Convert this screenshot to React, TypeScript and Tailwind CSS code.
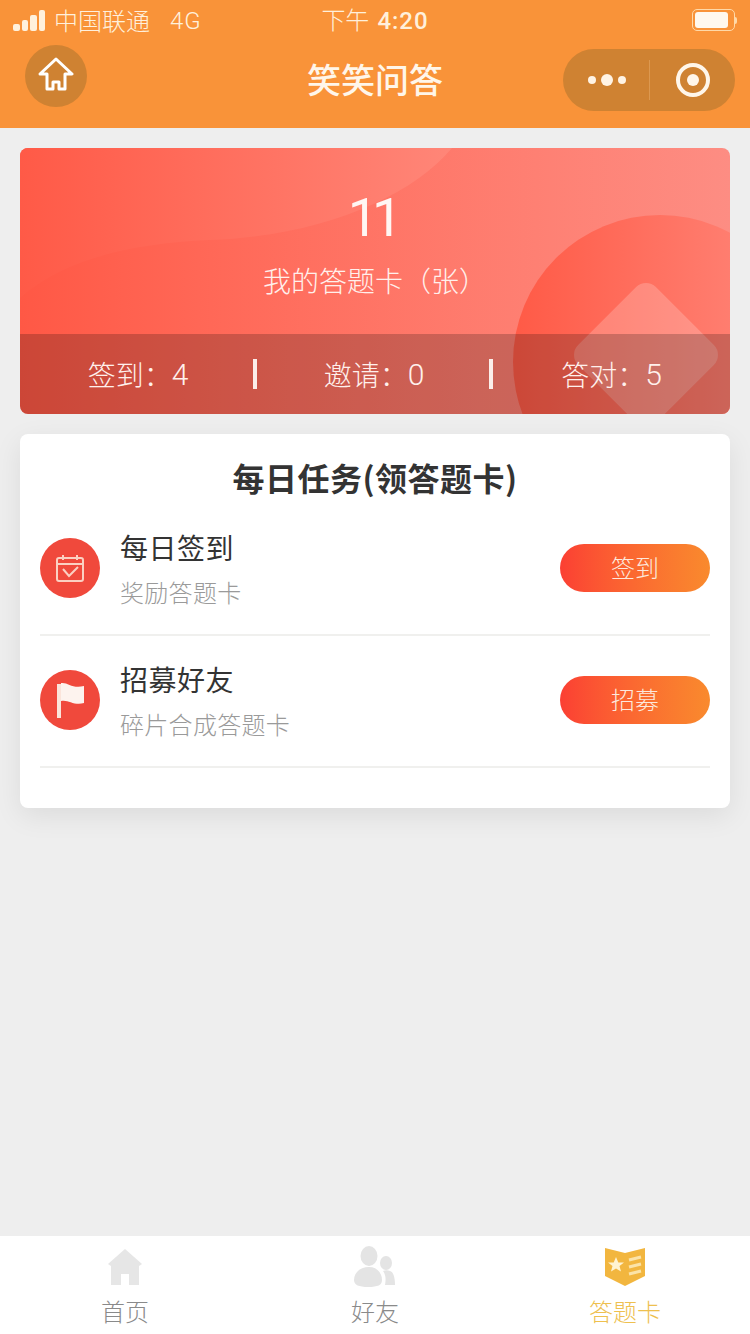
import type { ReactNode } from "react";

const font = { fontFamily: '"Noto Sans CJK SC", "Liberation Sans", sans-serif' };
const digits = { fontFamily: 'Roboto, "Liberation Sans", sans-serif' };

function Signal() {
  return (
    <div className="flex items-end gap-[2px]">
      <span className="h-[7px] w-[6.5px] rounded-[2px] bg-[#fff1dc]" />
      <span className="h-[11px] w-[6.5px] rounded-[2px] bg-[#fff1dc]" />
      <span className="h-[16px] w-[6.5px] rounded-[2px] bg-[#fff1dc]" />
      <span className="h-[21px] w-[6.5px] rounded-[2px] bg-[#fff1dc]" />
    </div>
  );
}

function Battery() {
  return (
    <div className="flex items-center">
      <div className="flex h-[22px] w-[43px] items-center rounded-[5px] border border-[#ffd9a8] p-[2px]">
        <div className="h-full w-[33px] rounded-[3px] bg-[#fff8ee]" />
      </div>
      <div className="h-[7px] w-[2px] rounded-r bg-[#ffd9a8]" />
    </div>
  );
}

function HomeOutline() {
  return (
    <svg viewBox="0 0 36 34" className="mb-[4px] h-[34px] w-[36px]" fill="none" stroke="#fff" strokeWidth="3" strokeLinejoin="round">
      <path d="M18 2 L34 17 H27 V32 H21 V25 H15 V32 H9 V17 H2 Z" />
    </svg>
  );
}

function StatBar() {
  return <span className="h-[30px] w-[4px] shrink-0 bg-[#fbeeea]" />;
}

function Stat({ label, value, className }: { label: string; value: string; className: string }) {
  return (
    <div className={`flex items-center justify-center text-[28px] font-light text-[#fff0ec] ${className}`}>
      <span>
        {label}
        {"\uFF1A"}
      </span>
      <span className="text-[30px]" style={digits}>{value}</span>
    </div>
  );
}

function CalendarIcon() {
  return (
    <svg viewBox="0 0 30 30" className="h-[30px] w-[30px]" fill="none" stroke="#fbd0c2" strokeWidth="2">
      <rect x="2" y="5" width="26" height="23" rx="2" />
      <path d="M2 11 H28 M8 2 V7 M22 2 V7" />
      <path d="M8 16 L14 23 L23 14" />
    </svg>
  );
}

function FlagIcon() {
  return (
    <svg viewBox="0 0 30 36" className="h-[36px] w-[30px]">
      <rect x="2" y="2" width="4" height="34" fill="#fbe4da" />
      <path d="M6 1 C13 0 17 7 29 4 V21 C19 24 13 17 6 19 Z" fill="#fdf3ee" />
    </svg>
  );
}

function TaskRow({ icon, title, desc, action }: { icon: ReactNode; title: string; desc: string; action: string }) {
  return (
    <div className="flex h-[132px] items-center border-b-2 border-[#f0f0ee] pb-[2px]">
      <div className="flex h-[60px] w-[60px] shrink-0 items-center justify-center rounded-full bg-[#f0493c]">{icon}</div>
      <div className="ml-[20px] flex-1">
        <div className="text-[28px] leading-[40px] tracking-[0.5px] text-[#333333]">{title}</div>
        <div className="mt-[8px] text-[24px] font-light leading-[34px] tracking-[0.3px] text-[#9a9a9a]">{desc}</div>
      </div>
      <div className="flex h-[48px] w-[150px] items-center justify-center rounded-full bg-gradient-to-r from-[#fb3f33] to-[#f98a2d] pb-[2px] text-[24px] font-light text-[#fde8dc]">
        {action}
      </div>
    </div>
  );
}

function TabHome() {
  return (
    <svg viewBox="0 0 36 36" className="h-[36px] w-[36px]">
      <path d="M18 0 L35 15 L32 17 V36 H22 V25 H14 V36 H4 V17 L1 15 Z" fill="#e6e6e6" />
    </svg>
  );
}

function TabFriends() {
  return (
    <svg viewBox="0 0 42 42" className="h-[42px] w-[42px]" fill="#e4e4e4">
      <ellipse cx="15" cy="10" rx="8.5" ry="10" />
      <path d="M0 34 C0 26 7 21 15 21 C23 21 28 27 28 34 C28 39 24 41 14 41 C5 41 0 39 0 34 Z" />
      <ellipse cx="32" cy="17" rx="6" ry="7" />
      <path d="M31 39 C32 34 32 29 29 25 C31 24 34 24 36 25 C39 26 41 30 41 39 Z" />
    </svg>
  );
}

function TabCard() {
  return (
    <svg viewBox="0 0 40 40" className="h-[40px] w-[40px]">
      <path d="M0 1 L20 6 L40 1 V29 L20 39 L0 29 Z" fill="#f2b63f" />
      <path d="M11 10 L13.3 15.5 L19 15.5 L14.5 19 L16 24.5 L11 21.5 L6 24.5 L7.5 19 L3 15.5 L8.7 15.5 Z" fill="#fff3d2" />
      <path d="M24 13 L36 10 M24 20 L36 17 M24 27 L36 24" stroke="#fbe3a8" strokeWidth="3" fill="none" />
    </svg>
  );
}

function Tab({ icon, label, active }: { icon: ReactNode; label: string; active?: boolean }) {
  return (
    <div className="flex flex-1 flex-col items-center">
      <div className="flex h-[42px] items-center justify-center">{icon}</div>
      <div className={`mt-[5px] text-[24px] font-light leading-[36px] ${active ? "text-[#eec04f]" : "text-[#8a8a8a]"}`}>{label}</div>
    </div>
  );
}

export default function App() {
  return (
    <div className="flex h-[1334px] w-[750px] flex-col overflow-hidden bg-[#eeeeee]" style={font}>
      {/* status + nav */}
      <header className="h-[128px] shrink-0 bg-[#f99339]">
        <div className="grid h-[40px] grid-cols-[1fr_auto_1fr] items-center px-[13px] text-[24px] font-light text-[#fff0dc]">
          <div className="flex items-center">
            <Signal />
            <span className="ml-[9px]">中国联通</span>
            <span className="ml-[20px] pt-[2px] text-[24px] tracking-[1px]" style={digits}>4G</span>
          </div>
          <div>
            下午<span className="ml-[8px] font-medium tracking-[1px]" style={digits}>4:20</span>
          </div>
          <div className="justify-self-end">
            <Battery />
          </div>
        </div>
        <div className="grid h-[88px] grid-cols-[1fr_auto_1fr] px-[15px]">
          <div className="pl-[10px] pt-[5px]">
            <div className="flex h-[62px] w-[62px] items-center justify-center rounded-full bg-[#cf8232]">
              <HomeOutline />
            </div>
          </div>
          <div className="pt-[15px] text-[34px] font-medium leading-[48px] text-[#fff6ea]">笑笑问答</div>
          <div className="justify-self-end pt-[9px]">
            <div className="flex h-[62px] w-[172px] items-center rounded-full bg-[#cf8232]">
              <div className="flex w-[86px] items-center justify-center gap-[5px] pl-[2px]">
                <span className="h-[8px] w-[8px] rounded-full bg-[#fff3e4]" />
                <span className="h-[12px] w-[12px] rounded-full bg-[#fff3e4]" />
                <span className="h-[8px] w-[8px] rounded-full bg-[#fff3e4]" />
              </div>
              <span className="h-[40px] w-px bg-[#dc9850]" />
              <div className="flex flex-1 items-center justify-center">
                <div className="flex h-[34px] w-[34px] items-center justify-center rounded-full border-[4px] border-[#fff6ea]">
                  <span className="h-[12px] w-[12px] rounded-full bg-[#fff6ea]" />
                </div>
              </div>
            </div>
          </div>
        </div>
      </header>

      <main className="flex-1 px-[20px] pt-[20px]">
        {/* answer card summary */}
        <section className="relative h-[266px] overflow-hidden rounded-[8px] bg-gradient-to-r from-[#ff5845] to-[#fd8d83]">
          <svg viewBox="0 0 710 266" className="absolute inset-0 h-full w-full">
            <defs>
              <linearGradient id="swoosh" x1="0" x2="1" y1="0" y2="0">
                <stop offset="0" stopColor="#ff5a47" />
                <stop offset="1" stopColor="#ff8678" />
              </linearGradient>
              <linearGradient id="disc" x1="0" x2="1" y1="0" y2="0">
                <stop offset="0" stopColor="#ff5a46" />
                <stop offset="1" stopColor="#ff8a7e" />
              </linearGradient>
            </defs>
            <path d="M0 0 H432 C390 50 300 88 190 92 C100 96 40 115 0 150 Z" fill="url(#swoosh)" />
            <circle cx="640" cy="214" r="147" fill="url(#disc)" />
            <rect x="571" y="152" width="110" height="110" rx="14" transform="rotate(45 626 207)" fill="#ffffff" fillOpacity="0.2" />
          </svg>
          <div className="relative flex h-[186px] flex-col items-center pt-[34px]">
            <div className="pr-[6px] text-[54px] leading-[72px] tracking-[-6px] text-[#fff6f3]" style={digits}>11</div>
            <div className="mt-[4px] text-[28px] font-light leading-[44px] text-[#fff0ec]">
              {"我的答题卡\uFF08张\uFF09"}
            </div>
          </div>
          <div className="relative flex h-[80px] items-center bg-black/20">
            <Stat label="签到" value="4" className="w-[233px] pl-[3px]" />
            <StatBar />
            <Stat label="邀请" value="0" className="w-[232px] pl-[2px]" />
            <StatBar />
            <Stat label="答对" value="5" className="flex-1" />
          </div>
        </section>

        {/* daily tasks */}
        <section className="mt-[20px] h-[374px] rounded-[8px] bg-white px-[20px] pt-[18px] shadow-[0_8px_28px_rgba(0,0,0,0.08)]">
          <h2 className="mb-[2px] text-center text-[32px] font-bold leading-[50px] tracking-[0.5px] text-[#333333]">每日任务(领答题卡)</h2>
          <TaskRow icon={<CalendarIcon />} title="每日签到" desc="奖励答题卡" action="签到" />
          <TaskRow icon={<FlagIcon />} title="招募好友" desc="碎片合成答题卡" action="招募" />
        </section>
      </main>

      {/* tab bar */}
      <nav className="flex h-[98px] shrink-0 bg-white pt-[10px]">
        <Tab icon={<TabHome />} label="首页" />
        <Tab icon={<TabFriends />} label="好友" />
        <Tab icon={<TabCard />} label="答题卡" active />
      </nav>
    </div>
  );
}
